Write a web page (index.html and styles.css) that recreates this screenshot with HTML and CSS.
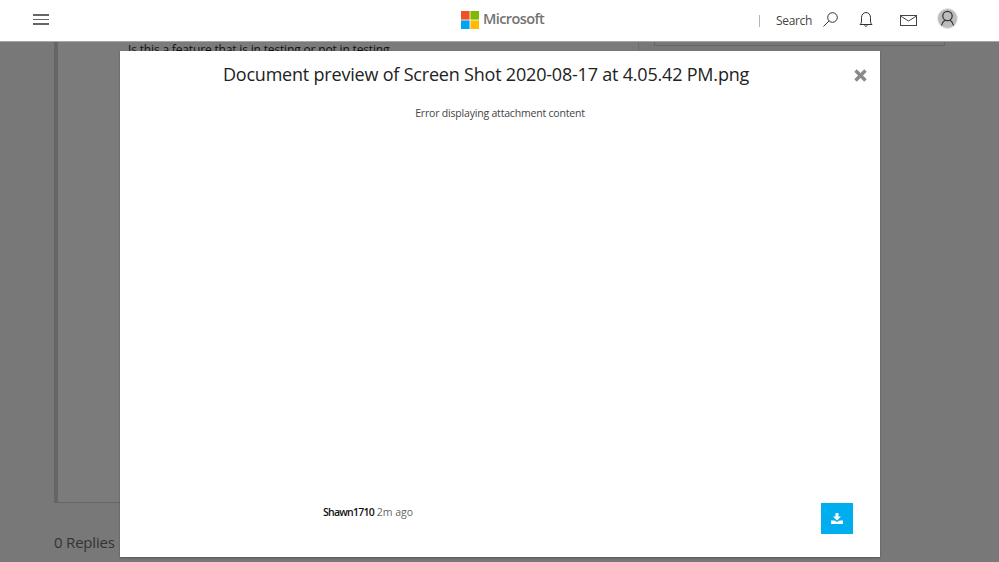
FILE: index.html

```html
<!DOCTYPE html>
<html lang="en">
<head>
  <meta charset="UTF-8" />
  <meta name="viewport" content="width=device-width, initial-scale=1.0" />
  <title>Document preview</title>
  <link rel="stylesheet" href="styles.css">
</head>
<body>
  <header class="topbar">
    <button class="menu-btn" aria-label="Menu">
      <span></span><span></span><span></span>
    </button>
    <div class="brand">
      <svg class="brand-logo" width="18" height="18" viewBox="0 0 18 18">
        <rect width="8.6" height="8.6" fill="#f25022" />
        <rect x="9.4" width="8.6" height="8.6" fill="#7fba00" />
        <rect y="9.4" width="8.6" height="8.6" fill="#00a4ef" />
        <rect x="9.4" y="9.4" width="8.6" height="8.6" fill="#ffb900" />
      </svg>
      <span class="brand-name">Microsoft</span>
    </div>
    <div class="tools">
      <span class="tools-sep"></span>
      <span class="search-label">Search</span>
      <svg class="tool-search" width="15" height="15" viewBox="0 0 15 15" fill="none" stroke="#333" stroke-width="1">
        <circle cx="9.5" cy="5.500" r="4.800" />
        <path d="M6 9L.5 14.500" />
      </svg>
      <svg class="tool-bell" width="14" height="15" viewBox="0 0 14 15" fill="none" stroke="#333" stroke-width="1">
        <path d="M1 12.500c1-.8 1.500-1.900 1.500-3.500V5.500C2.500 2.700 4.500.5 7 .5s4.500 2.200 4.500 5V9c0 1.600.5 2.700 1.500 3.500z" />
        <path d="M5.500 13.500c.4.9 2.600.9 3 0" />
      </svg>
      <svg class="tool-mail" width="17" height="11" viewBox="0 0 17 11" fill="none" stroke="#444" stroke-width="1">
        <rect x=".5" y=".5" width="16" height="10" />
        <path d="M.5 1L8.500 6l8-5" />
      </svg>
      <svg class="tool-user" width="21" height="21" viewBox="0 0 21 21" fill="none">
        <circle cx="10.500" cy="10.500" r="10" fill="#bcbcbc" stroke="#e8e8e8" />
        <circle cx="10.500" cy="8" r="4.700" stroke="#333" stroke-width="1.200" />
        <path d="M4.500 17.500c.4-2.700 2-4.300 3.400-5.300M16.500 17.500c-.4-2.700-2-4.300-3.400-5.300" stroke="#333" stroke-width="1.200" />
      </svg>
    </div>
  </header>

  <main class="page">
    <section class="post">
      <p class="post-text">Is this a feature that is in testing or not in testing</p>
    </section>
    <aside class="side-box"></aside>
    <p class="replies">0 Replies</p>
  </main>

  <div class="modal">
    <button class="modal-close" aria-label="Close">
      <svg width="13" height="13" viewBox="0 0 13 13" fill="none" stroke="#8a8a8a" stroke-width="3.400">
        <path d="M1.500 1.500l10 10M11.500 1.500l-10 10" />
      </svg>
    </button>
    <h2 class="modal-title">Document preview of Screen Shot 2020-08-17 at 4.05.42 PM.png</h2>
    <p class="modal-error">Error displaying attachment content</p>
    <div class="modal-foot">
      <p class="meta"><strong>Shawn1710</strong> <span>2m ago</span></p>
      <button class="download" aria-label="Download">
        <svg width="12" height="11" viewBox="0 0 12 11" fill="#fff">
          <path d="M4.500 0h3v3.500H10L6 7.500 2 3.500h2.500z" />
          <path d="M0 7.500h3.500L6 9l2.500-1.500H12V11H0z" />
        </svg>
      </button>
    </div>
  </div>
</body>
</html>
```

FILE: styles.css

```css
html, body {
  margin: 0;
  padding: 0;
  height: 562px;
  overflow: hidden;
  background: #787878;
  font-family: 'Open Sans', 'Noto Sans', sans-serif;
  color: #222;
}
button {
  padding: 0;
  border: 0;
  background: none;
}
.topbar {
  display: flex;
  align-items: center;
  position: relative;
  height: 41px;
  background: #fff;
  border-bottom: 1px solid #a6a6a6;
}
.menu-btn {
  display: flex;
  flex-direction: column;
  gap: 3px;
  width: 16px;
  margin: -2px 0 0 33px;
}
.menu-btn span {
  display: block;
  height: 1.500px;
  background: #666;
}
.brand {
  display: flex;
  align-items: center;
  gap: 4px;
  position: absolute;
  left: 461px;
  top: 11px;
  height: 18px;
}
.brand-name {
  font-size: 14.500px;
  font-weight: 600;
  line-height: 18px;
  letter-spacing: -0.6px;
  color: #737373;
  margin-top: -2px;
}
.tools {
  display: flex;
  align-items: center;
  margin-left: auto;
  margin-right: 41px;
}
.tools-sep {
  width: 1px;
  height: 12px;
  background: #b5b5b5;
  margin-right: 16px;
}
.search-label {
  font-size: 12px;
  letter-spacing: -0.35px;
  color: #444;
  margin-right: 11px;
}
.tools svg { margin-top: -2px; }
.tool-bell { margin-left: 21px; }
.tools .tool-mail { margin: 0 0 0 27px; }
.tools .tool-user { margin: -5px 0 0 20px; }

.page {
  position: relative;
  height: 520px;
  overflow: hidden;
}
.post {
  box-sizing: border-box;
  width: 585px;
  height: 461px;
  margin-left: 54px;
  background: #7b7b7b;
  border-left: 4px solid #666;
  border-bottom: 1px solid #666;
  border-right: 1px solid #6e6e6e;
}
.post-text {
  margin: 0 0 0 70px;
  padding-top: 1px;
  font-size: 12px;
  letter-spacing: -0.16px;
  line-height: 14px;
  color: #111;
}
.side-box {
  position: absolute;
  left: 654px;
  top: 0;
  width: 289px;
  height: 3px;
  border: 1px solid #666;
  border-top: 0;
}
.replies {
  margin: 29px 0 0 54px;
  font-size: 15px;
  letter-spacing: -0.2px;
  line-height: 20px;
  color: #333;
}

.modal {
  display: flex;
  flex-direction: column;
  box-sizing: border-box;
  position: absolute;
  left: 120px;
  top: 51px;
  width: 760px;
  height: 506px;
  padding-top: 9px;
  background: #fff;
  box-shadow: 0 1px 2px rgba(0, 0, 0, .3);
}
.modal-close {
  position: absolute;
  top: 18px;
  right: 13px;
  line-height: 0;
}
.modal-title {
  margin: 0;
  padding-right: 28px;
  text-align: center;
  font-size: 18px;
  font-weight: 400;
  letter-spacing: -0.2px;
  line-height: 28px;
  color: #222;
}
.modal-error {
  margin: 17px 0 0;
  text-align: center;
  font-size: 10.500px;
  letter-spacing: -0.19px;
  line-height: 16px;
  color: #444;
}
.modal-foot {
  display: flex;
  justify-content: space-between;
  align-items: flex-start;
  margin-top: auto;
  padding: 0 27px 23px 203px;
}
.meta {
  margin: 1px 0 0;
  font-size: 10.500px;
  line-height: 16px;
  color: #666;
}
.meta strong {
  font-weight: 600;
  letter-spacing: -0.75px;
  color: #111;
}
.download {
  display: flex;
  align-items: center;
  justify-content: center;
  width: 32px;
  height: 31px;
  background: #00adef;
}
```
